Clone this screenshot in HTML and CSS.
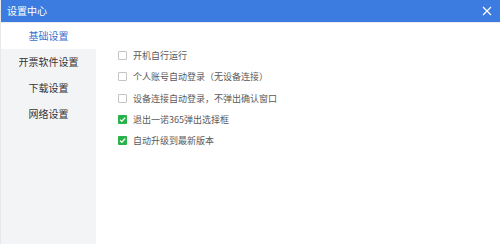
FILE: index.html
```html
<!DOCTYPE html>
<html lang="zh">
<head>
<meta charset="utf-8">
<link rel="stylesheet" href="styles.css">
</head>
<body>
<div class="window">
  <div class="titlebar">
    <span class="title">设置中心</span>
    <svg class="close" width="10" height="10" viewBox="0 0 10 10"><path d="M1 1L9 9M9 1L1 9" stroke="#fff" stroke-width="1.2" fill="none"/></svg>
  </div>
  <div class="body">
    <nav class="sidebar">
      <div class="nav-item active">基础设置</div>
      <div class="nav-item">开票软件设置</div>
      <div class="nav-item">下载设置</div>
      <div class="nav-item">网络设置</div>
      <div class="nav-fill"></div>
    </nav>
    <main class="content">
      <div class="opt"><span class="box"></span><span class="label">开机自行运行</span></div>
      <div class="opt"><span class="box"></span><span class="label">个人账号自动登录（无设备连接）</span></div>
      <div class="opt"><span class="box"></span><span class="label">设备连接自动登录，不弹出确认窗口</span></div>
      <div class="opt"><span class="box checked"><svg width="9" height="9" viewBox="0 0 9 9"><path d="M2 4.6L3.8 6.3L7.2 2.6" stroke="#fff" stroke-width="1.3" fill="none"/></svg></span><span class="label">退出一诺365弹出选择框</span></div>
      <div class="opt"><span class="box checked"><svg width="9" height="9" viewBox="0 0 9 9"><path d="M2 4.6L3.8 6.3L7.2 2.6" stroke="#fff" stroke-width="1.3" fill="none"/></svg></span><span class="label">自动升级到最新版本</span></div>
    </main>
  </div>
</div>
</body>
</html>
```
FILE: styles.css
```css
html, body {
  margin: 0;
  padding: 0;
  width: 500px;
  height: 244px;
  overflow: hidden;
  background: #fff;
  font-family: "Noto Sans CJK SC", "Microsoft YaHei", sans-serif;
}
.window {
  width: 500px;
  height: 244px;
  display: flex;
  flex-direction: column;
  box-sizing: border-box;
  border-left: 1px solid #e6e8eb;
}
.titlebar {
  height: 22px;
  background: #3c7ce0;
  display: flex;
  align-items: center;
  justify-content: space-between;
  padding: 0 7px 0 6px;
  flex-shrink: 0;
}
.title {
  color: #fff;
  font-size: 10px;
  line-height: 22px;
}
.close {
  display: block;
  margin-right: 1px;
}
.body {
  flex: 1;
  display: flex;
  border-top: 1px solid #e9ebee;
}
.sidebar {
  width: 95px;
  display: flex;
  flex-direction: column;
}
.nav-item {
  height: 26px;
  line-height: 26px;
  text-align: center;
  font-size: 10px;
  color: #333;
  background: #f3f4f6;
}
.nav-item.active {
  background: #fff;
  color: #3b6fd0;
}
.nav-fill {
  flex: 1;
  background: #f3f4f6;
}
.content {
  flex: 1;
  padding: 28px 0 0 22px;
  display: flex;
  flex-direction: column;
  gap: 12.25px;
}
.opt {
  display: flex;
  align-items: center;
  height: 9px;
}
.box {
  width: 9px;
  height: 9px;
  box-sizing: border-box;
  border: 1px solid #c4c4c4;
  border-radius: 1px;
  background: #fff;
  display: flex;
  align-items: center;
  justify-content: center;
  flex-shrink: 0;
}
.box.checked {
  border: none;
  background: #27b24a;
}
.box svg {
  display: block;
}
.label {
  margin-left: 6px;
  font-size: 9px;
  color: #5a5a5a;
  line-height: 9px;
}
```
